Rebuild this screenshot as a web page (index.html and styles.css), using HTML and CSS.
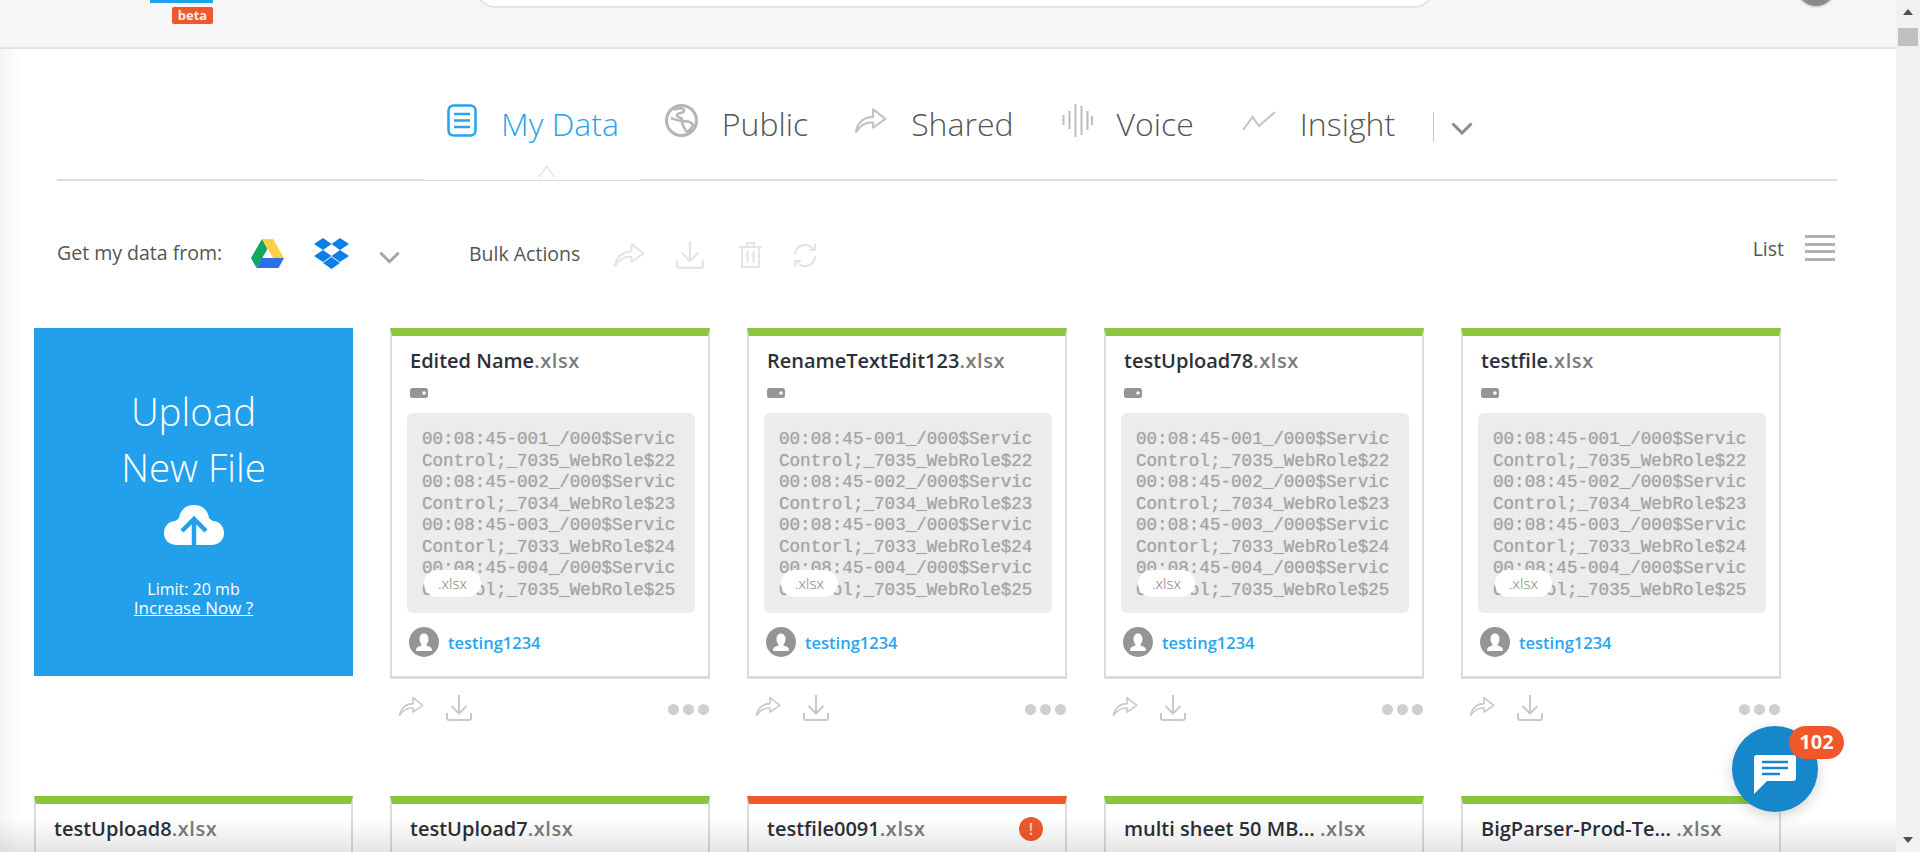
FILE: index.html
```html
<!DOCTYPE html>
<html lang="en">
<head>
    <meta charset="UTF-8">
    <title>My Data</title>
    <link rel="stylesheet" href="styles.css">
</head>
<body>
    <svg class="defs" width="0" height="0">
        <symbol id="i-share" viewBox="0 0 32 26">
            <path d="M2 24C3 15 10 9.500 18.500 9.500V2L30.500 11.500 18.500 20V15C11 14 6 18 2 24Z" fill="none" stroke="currentColor" stroke-width="2" stroke-linejoin="round"/>
        </symbol>
        <symbol id="i-download" viewBox="0 0 26 26">
            <path d="M13 0V18M5.500 11L13 18.500 20.500 11M1 18V23A2 2 0 0 0 3 25H23A2 2 0 0 0 25 23V18" fill="none" stroke="currentColor" stroke-width="2"/>
        </symbol>
        <symbol id="i-user" viewBox="0 0 30 30">
            <circle cx="15" cy="15" r="15" fill="#939598"/>
            <path d="M15 6.500C18 6.500 19.500 9 19.500 12 19.500 14.500 18.500 16.500 17.500 17.500V18.500C20 19.500 23 20 23 23 23 24 22 24 21 24H9C8 24 7 24 7 23 7 20 10 19.500 12.500 18.500V17.500C11.500 16.500 10.500 14.500 10.500 12 10.500 9 12 6.500 15 6.500Z" fill="#fff"/>
        </symbol>
        <symbol id="i-disk" viewBox="0 0 18 10">
            <rect width="18" height="10" rx="2.500" fill="#939598"/>
            <circle cx="14" cy="5" r="1.800" fill="#fff"/>
        </symbol>
    </svg>

    <div class="page">
        <main class="main">
            <header class="topbar">
                <div class="logo">
                    <span class="logo-bar"></span>
                    <span class="beta">beta</span>
                </div>
                <div class="search"></div>
                <div class="me"></div>
            </header>

            <nav class="tabs">
                <a class="tab active">
                    <svg class="tab-icon" width="30" height="33" viewBox="0 0 30 33"><rect x="1.500" y="1.500" width="27" height="30" rx="5" fill="none" stroke="currentColor" stroke-width="2.500"/><path d="M7 10H23M7 16.500H23M7 23H23" stroke="currentColor" stroke-width="2.500"/></svg>
                    <span>My Data</span>
                </a>
                <a class="tab tab-public">
                    <svg class="tab-icon" width="33" height="33" viewBox="0 0 33 33"><circle cx="16.500" cy="16.500" r="15" fill="none" stroke="#b5b5b5" stroke-width="3"/><path d="M9 6C14 3 20 4 19 7 18 10 13 8 12 11 11 14 18 13 17 16 16 18 9 15 6 14M17 18C21 16 27 18 28 21 26 25 23 29 21 27 20 24 17 22 17 18Z" fill="none" stroke="#b5b5b5" stroke-width="2.500"/></svg>
                    <span>Public</span>
                </a>
                <a class="tab">
                    <svg class="tab-icon icon-grey" width="33" height="27"><use href="#i-share"/></svg>
                    <span>Shared</span>
                </a>
                <a class="tab">
                    <svg class="tab-icon" width="31" height="33" viewBox="0 0 31 33"><path d="M1.500 11V21M7.500 7V25M13.500 0V33M19.500 2V31M25.500 7V26M30 12V21" stroke="#bdbdbd" stroke-width="2"/></svg>
                    <span>Voice</span>
                </a>
                <a class="tab">
                    <svg class="tab-icon" width="34" height="20" viewBox="0 0 34 20"><path d="M1 19L10.500 6 17 15 33 1" fill="none" stroke="#c4c4c4" stroke-width="2"/></svg>
                    <span>Insight</span>
                </a>
                <span class="tab-sep"></span>
                <svg class="chevron" width="22" height="13" viewBox="0 0 22 13"><path d="M1.500 1.500L11 11 20.500 1.500" fill="none" stroke="#8c8c8c" stroke-width="3"/></svg>
                <span class="tab-line"></span>
                <span class="tab-caret"></span>
            </nav>

            <div class="toolbar">
                <span class="from-label">Get my data from:</span>
                <svg class="drive" width="33" height="29" viewBox="0 0 33 29">
                    <path d="M11 0L0 19 5.500 29 16.500 10Z" fill="#0da960"/>
                    <path d="M11 0H22L33 19H22Z" fill="#ffcf48"/>
                    <path d="M5.500 29H27.500L33 19H11Z" fill="#2d6fe8"/>
                </svg>
                <svg class="dropbox" width="35" height="31" viewBox="0 0 35 31" fill="#0a7fe6">
                    <path d="M9 0L17.500 6 9 12 0 6Z"/>
                    <path d="M26 0L35 6 26 12 17.500 6Z"/>
                    <path d="M9 12L17.500 18 9 24 0 18Z"/>
                    <path d="M26 12L35 18 26 24 17.500 18Z"/>
                    <path d="M17.500 19L26 25 17.500 31 9 25Z"/>
                </svg>
                <svg class="chevron-small" width="21" height="13" viewBox="0 0 22 13"><path d="M1.500 1.500L11 11 20.500 1.500" fill="none" stroke="#a5a5a5" stroke-width="3"/></svg>
                <span class="bulk-label">Bulk Actions</span>
                <svg class="bulk-icon bulk-share" width="32" height="26"><use href="#i-share"/></svg>
                <svg class="bulk-icon bulk-down" width="28" height="28"><use href="#i-download"/></svg>
                <svg class="bulk-icon bulk-trash" width="25" height="28" viewBox="0 0 25 28"><path d="M1 6H24M9 6V2H16V6M4 6V26H21V6M9.500 10V22M15.500 10V22" fill="none" stroke="currentColor" stroke-width="2"/></svg>
                <svg class="bulk-icon" width="30" height="27" viewBox="0 0 30 27"><path d="M5 13A10 10 0 0 1 23 7M25 14A10 10 0 0 1 7 20M19 8H25V2M11 19H5V25" fill="none" stroke="currentColor" stroke-width="2"/></svg>
                <div class="view-switch">
                    <span>List</span>
                    <div class="burger"><i></i><i></i><i></i><i></i></div>
                </div>
            </div>

            <section class="grid">
                <div class="upload">
                    <div class="upload-title">Upload<br>New File</div>
                    <svg class="cloud" width="60" height="40" viewBox="0 0 60 40"><path d="M13 40C5 40 0 35 0 28 0 21 5 16 11 16 13 15 14 14 15 13 16 5 22 0 30 0 38 0 44 5 45 13 46 14 47 15 49 16 55 16 60 21 60 28 60 35 55 40 47 40Z" fill="#fff"/><path d="M18 26L30 14 42 26M30 14V40" fill="none" stroke="#22a0ec" stroke-width="4.500"/></svg>
                    <div class="upload-limit">Limit: 20 mb</div>
                    <a class="upload-link">Increase Now ?</a>
                </div>

                <div class="cell">
                    <div class="card">
                        <div class="card-title">Edited Name<em>.xlsx</em></div>
                        <svg class="disk" width="18" height="10"><use href="#i-disk"/></svg>
                        <div class="preview">00:08:45-001_/000$Servic
Control;_7035_WebRole$22
00:08:45-002_/000$Servic
Control;_7034_WebRole$23
00:08:45-003_/000$Servic
Contorl;_7033_WebRole$24
00:08:45-004_/000$Servic
Control;_7035_WebRole$25<span class="ext">.xlsx</span></div>
                        <div class="owner"><svg width="30" height="30"><use href="#i-user"/></svg><a>testing1234</a></div>
                    </div>
                    <div class="actions">
                        <svg width="26" height="21"><use href="#i-share"/></svg>
                        <svg width="26" height="26"><use href="#i-download"/></svg>
                        <div class="dots"><i></i><i></i><i></i></div>
                    </div>
                </div>

                <div class="cell">
                    <div class="card">
                        <div class="card-title">RenameTextEdit123<em>.xlsx</em></div>
                        <svg class="disk" width="18" height="10"><use href="#i-disk"/></svg>
                        <div class="preview">00:08:45-001_/000$Servic
Control;_7035_WebRole$22
00:08:45-002_/000$Servic
Control;_7034_WebRole$23
00:08:45-003_/000$Servic
Contorl;_7033_WebRole$24
00:08:45-004_/000$Servic
Control;_7035_WebRole$25<span class="ext">.xlsx</span></div>
                        <div class="owner"><svg width="30" height="30"><use href="#i-user"/></svg><a>testing1234</a></div>
                    </div>
                    <div class="actions">
                        <svg width="26" height="21"><use href="#i-share"/></svg>
                        <svg width="26" height="26"><use href="#i-download"/></svg>
                        <div class="dots"><i></i><i></i><i></i></div>
                    </div>
                </div>

                <div class="cell">
                    <div class="card">
                        <div class="card-title">testUpload78<em>.xlsx</em></div>
                        <svg class="disk" width="18" height="10"><use href="#i-disk"/></svg>
                        <div class="preview">00:08:45-001_/000$Servic
Control;_7035_WebRole$22
00:08:45-002_/000$Servic
Control;_7034_WebRole$23
00:08:45-003_/000$Servic
Contorl;_7033_WebRole$24
00:08:45-004_/000$Servic
Control;_7035_WebRole$25<span class="ext">.xlsx</span></div>
                        <div class="owner"><svg width="30" height="30"><use href="#i-user"/></svg><a>testing1234</a></div>
                    </div>
                    <div class="actions">
                        <svg width="26" height="21"><use href="#i-share"/></svg>
                        <svg width="26" height="26"><use href="#i-download"/></svg>
                        <div class="dots"><i></i><i></i><i></i></div>
                    </div>
                </div>

                <div class="cell">
                    <div class="card">
                        <div class="card-title">testfile<em>.xlsx</em></div>
                        <svg class="disk" width="18" height="10"><use href="#i-disk"/></svg>
                        <div class="preview">00:08:45-001_/000$Servic
Control;_7035_WebRole$22
00:08:45-002_/000$Servic
Control;_7034_WebRole$23
00:08:45-003_/000$Servic
Contorl;_7033_WebRole$24
00:08:45-004_/000$Servic
Control;_7035_WebRole$25<span class="ext">.xlsx</span></div>
                        <div class="owner"><svg width="30" height="30"><use href="#i-user"/></svg><a>testing1234</a></div>
                    </div>
                    <div class="actions">
                        <svg width="26" height="21"><use href="#i-share"/></svg>
                        <svg width="26" height="26"><use href="#i-download"/></svg>
                        <div class="dots"><i></i><i></i><i></i></div>
                    </div>
                </div>

                <div class="cell"><div class="card"><div class="card-title">testUpload8<em>.xlsx</em></div></div></div>
                <div class="cell"><div class="card"><div class="card-title">testUpload7<em>.xlsx</em></div></div></div>
                <div class="cell"><div class="card failed"><div class="card-title">testfile0091<em>.xlsx</em><span class="alert">!</span></div></div></div>
                <div class="cell"><div class="card"><div class="card-title">multi sheet 50 MB... <em>.xlsx</em></div></div></div>
                <div class="cell"><div class="card"><div class="card-title">BigParser-Prod-Te... <em>.xlsx</em></div></div></div>
            </section>
        </main>

        <div class="scrollbar">
            <span class="arrow-up"></span>
            <span class="thumb"></span>
            <span class="arrow-down"></span>
        </div>
    </div>

    <div class="chat">
        <svg width="42" height="39" viewBox="0 0 42 39"><path d="M3 0H39A3 3 0 0 1 42 3V23A3 3 0 0 1 39 26H13L0 39V3A3 3 0 0 1 3 0Z" fill="#fff"/><path d="M8 7H34M8 13H34M8 19H26" stroke="#1787cb" stroke-width="2.500"/></svg>
        <span class="chat-count">102</span>
    </div>
</body>
</html>
```

FILE: styles.css
```css
html, body {
    height: 100%;
}
body {
    margin: 0;
    overflow: hidden;
    font-family: 'Open Sans', 'Liberation Sans', sans-serif;
    background-color: #ffffff;
    color: #4a4a4a;
}
.defs {
    position: absolute;
}
.page {
    display: flex;
    height: 852px;
    overflow: hidden;
}
.main {
    flex: 1;
    position: relative;
    min-width: 0;
}
/* soft shade on the left edge and along the bottom of the window */
.main::after {
    content: "";
    position: absolute;
    left: 0;
    right: 0;
    top: 49px;
    height: 803px;
    pointer-events: none;
    background:
        linear-gradient(to top, rgba(0, 0, 0, 0.1), rgba(0, 0, 0, 0) 34px),
        linear-gradient(to right, rgba(0, 0, 0, 0.04), rgba(0, 0, 0, 0) 22px);
}

/* top bar, scrolled partly out of the window */
.topbar {
    height: 47px;
    background-color: #f6f6f6;
    border-bottom: 2px solid #e3e3e3;
    position: relative;
    overflow: hidden;
}
.logo {
    position: absolute;
    left: 150px;
    top: 0;
    width: 63px;
}
.logo-bar {
    display: block;
    height: 3px;
    background-color: #22a0ec;
}
.beta {
    display: block;
    margin: 4px 0 0 22px;
    height: 17px;
    line-height: 16px;
    border-radius: 2px;
    background-color: #f0582c;
    color: #ffe9e2;
    font-size: 13px;
    font-weight: 700;
    text-align: center;
}
.search {
    position: absolute;
    left: 475px;
    top: -34px;
    width: 956px;
    height: 38px;
    background-color: #ffffff;
    border: 2px solid #e3e3e3;
    border-radius: 22px;
}
.me {
    position: absolute;
    left: 1795px;
    top: -34px;
    width: 38px;
    height: 38px;
    border-radius: 50%;
    background-color: #8b8b8b;
    border: 2px solid #dddddd;
}

/* tabs */
.tabs {
    position: relative;
    display: flex;
    align-items: center;
    height: 132px;
    margin: 0 59px 0 57px;
    padding-left: 390px;
    box-sizing: border-box;
    border-bottom: 2px solid #dcdcdc;
    font-size: 32px;
    font-weight: 300;
}
.tab {
    display: flex;
    align-items: center;
    gap: 24px;
    margin-right: 48px;
    margin-top: 19px;
    color: #555555;
}
.tab.active {
    color: #25a3ee;
    margin-right: 46px;
}
.tab-public {
    margin-right: 46px;
}
.tab-icon {
    display: block;
    margin-top: -6px;
}
.icon-grey {
    color: #c2c2c2;
}
.tab-sep {
    width: 1px;
    height: 30px;
    margin: 25px 17px 0 -10px;
    background-color: #c9c9c9;
}
.chevron {
    margin-top: 29px;
}
.tab-line {
    position: absolute;
    left: 366px;
    bottom: -2px;
    width: 217px;
    height: 1px;
    background-color: #ffffff;
    border-bottom: 1px solid #dcdcdc;
}
.tab-caret {
    position: absolute;
    left: 482px;
    bottom: -6px;
    width: 14px;
    height: 14px;
    background-color: #ffffff;
    border-left: 1px solid #cfcfcf;
    border-top: 1px solid #cfcfcf;
    transform: rotate(45deg) skew(8deg, 8deg);
    clip-path: polygon(0 0, 100% 0, 0 100%);
}

/* data source and bulk actions row */
.toolbar {
    display: flex;
    align-items: center;
    height: 55px;
    margin: 45px 61px 0 57px;
    font-size: 19.500px;
    color: #555555;
}
.from-label {
    width: 194px;
    margin-top: -2px;
}
.drive {
    margin-right: 30px;
}
.dropbox {
    margin-right: 30px;
}
.chevron-small {
    margin-top: 7px;
    margin-right: 69px;
}
.bulk-label {
    width: 144px;
}
.bulk-icon {
    color: #e4e4e4;
    margin-top: 3px;
    margin-right: 31px;
}
.bulk-down {
    margin-right: 34px;
}
.bulk-trash {
    margin-right: 27px;
}
.view-switch {
    display: flex;
    align-items: center;
    gap: 21px;
    margin-left: auto;
    margin-top: -11px;
}
.burger {
    display: flex;
    flex-direction: column;
    gap: 4.670px;
    width: 30px;
}
.burger i {
    display: block;
    height: 3px;
    background-color: #b0b0b0;
}

/* file cards */
.grid {
    display: grid;
    grid-template-columns: 319px repeat(4, 320px);
    column-gap: 37px;
    grid-template-rows: 468px auto;
    margin: 47px 0 0 34px;
}
.upload {
    height: 348px;
    box-sizing: border-box;
    padding-top: 55px;
    background-color: #22a0ec;
    color: #ffffff;
    text-align: center;
}
.upload-title {
    font-size: 38.500px;
    font-weight: 300;
    line-height: 56px;
}
.cloud {
    display: block;
    margin: 10px auto 0;
}
.upload-limit {
    margin-top: 34px;
    font-size: 16px;
    line-height: 20px;
}
.upload-link {
    display: block;
    margin-top: -1px;
    font-size: 17px;
    line-height: 20px;
    text-decoration: underline;
}
.cell {
    min-width: 0;
}
.card {
    position: relative;
    height: 351px;
    box-sizing: border-box;
    padding: 15px 15px 0;
    background-color: #ffffff;
    border-top: 8px solid #8cc63f;
    border-left: 2px solid #d8dcdc;
    border-right: 2px solid #d8dcdc;
    border-bottom: 3px solid #d8dcdc;
}
.card.failed {
    border-top-color: #f0582c;
}
.card-title {
    position: relative;
    height: 20px;
    line-height: 20px;
    padding-left: 3px;
    font-size: 20px;
    font-weight: 600;
    color: #2d2f38;
    white-space: nowrap;
}
.card-title em {
    font-style: normal;
    color: #7c7c7c;
    letter-spacing: 0.6px;
}
.alert {
    position: absolute;
    right: 7px;
    top: -2px;
    width: 24px;
    height: 24px;
    line-height: 24px;
    border-radius: 50%;
    background-color: #f0582c;
    color: #ffd9cd;
    font-size: 16px;
    text-align: center;
}
.disk {
    display: block;
    margin: 17px 0 0 3px;
}
.preview {
    position: relative;
    height: 200px;
    width: 288px;
    margin-top: 15px;
    box-sizing: border-box;
    padding: 16px 0 0 15px;
    border-radius: 6px;
    background-color: #ececec;
    color: #a3a3a3;
    font-family: 'Liberation Mono', monospace;
    font-size: 17.600px;
    line-height: 21.500px;
    white-space: pre;
    text-shadow: 0 0 1px rgba(150, 150, 150, 0.5);
}
.ext {
    position: absolute;
    left: 17px;
    top: 157px;
    width: 57px;
    height: 27px;
    line-height: 26px;
    border-radius: 14px;
    background-color: #ffffff;
    color: #777777;
    font-family: 'Open Sans', sans-serif;
    font-size: 15px;
    font-weight: 300;
    text-align: center;
    text-shadow: none;
}
.owner {
    display: flex;
    align-items: center;
    gap: 9px;
    margin: 14px 0 0 2px;
    color: #27a5ef;
    font-size: 16.500px;
    font-weight: 600;
}
.owner svg {
    display: block;
}
.actions {
    display: flex;
    align-items: center;
    height: 26px;
    margin-top: 16px;
    padding: 0 1px 0 8px;
    color: #c7c9cb;
}
.actions svg:first-child {
    margin-right: 22px;
    margin-top: -3px;
}
.dots {
    display: flex;
    gap: 4px;
    margin-left: auto;
    margin-top: 2px;
}
.dots i {
    display: block;
    width: 11px;
    height: 11px;
    border-radius: 50%;
    background-color: #ccd0d3;
}

/* window scrollbar */
.scrollbar {
    position: relative;
    width: 24px;
    flex: none;
    background-color: #f1f1f1;
}
.thumb {
    position: absolute;
    left: 2px;
    top: 28px;
    width: 20px;
    height: 18px;
    background-color: #c1c1c1;
}
.arrow-up, .arrow-down {
    position: absolute;
    left: 7px;
    width: 0;
    height: 0;
    border-left: 5px solid transparent;
    border-right: 5px solid transparent;
}
.arrow-up {
    top: 9px;
    border-bottom: 6px solid #505050;
}
.arrow-down {
    bottom: 9px;
    border-top: 6px solid #505050;
}

/* chat launcher */
.chat {
    position: fixed;
    left: 1732px;
    top: 726px;
    width: 86px;
    height: 86px;
    display: flex;
    align-items: center;
    justify-content: center;
    border-radius: 50%;
    background-color: #1787cb;
    box-shadow: 0 4px 14px rgba(0, 0, 0, 0.18);
}
.chat svg {
    margin-top: 10px;
}
.chat-count {
    position: absolute;
    left: 57px;
    top: 0;
    width: 55px;
    height: 33px;
    line-height: 32px;
    border-radius: 17px;
    background-color: #f0582c;
    color: #ffffff;
    font-size: 20px;
    font-weight: 700;
    text-align: center;
}
```
